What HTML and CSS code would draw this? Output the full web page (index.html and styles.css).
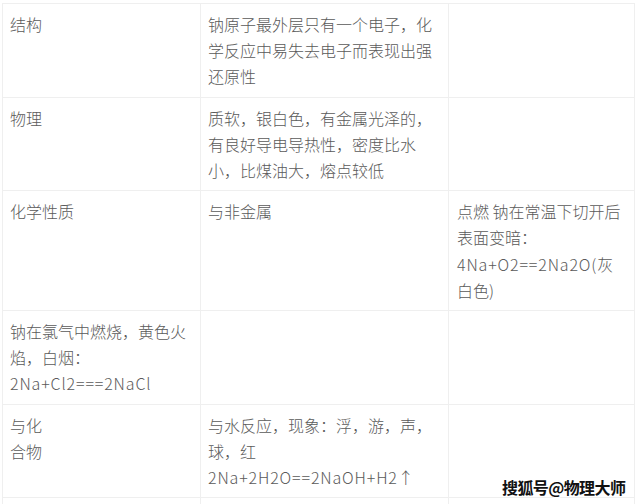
FILE: index.html
```html
<!DOCTYPE html>
<html lang="zh">
<head>
<meta charset="utf-8">
<link rel="stylesheet" href="styles.css">
</head>
<body>
<div class="page">
  <table class="grid">
    <colgroup>
      <col class="c1"><col class="c2"><col class="c3">
    </colgroup>
    <tr>
      <td>结构</td>
      <td>钠原子最外层只有一个电子，化<br>学反应中易失去电子而表现出强<br>还原性</td>
      <td></td>
    </tr>
    <tr>
      <td>物理</td>
      <td>质软，银白色，有金属光泽的，<br>有良好导电导热性，密度比水<br>小，比煤油大，熔点较低</td>
      <td></td>
    </tr>
    <tr>
      <td>化学性质</td>
      <td>与非金属</td>
      <td>点燃 钠在常温下切开后<br>表面变暗：<br><span class="f">4Na+O2==2Na2O(</span>灰<br>白色)</td>
    </tr>
    <tr>
      <td>钠在氯气中燃烧，黄色火<br>焰，白烟：<br><span class="f">2Na+Cl2===2NaCl</span></td>
      <td></td>
      <td></td>
    </tr>
    <tr>
      <td>与化<br>合物</td>
      <td>与水反应，现象：浮，游，声，<br>球，红<br><span class="f">2Na+2H2O==2NaOH+H2</span>↑</td>
      <td></td>
    </tr>
    <tr class="tail">
      <td></td><td></td><td></td>
    </tr>
  </table>
  <div class="mark">搜狐号@物理大师</div>
</div>
</body>
</html>
```

FILE: styles.css
```css
html, body {
  margin: 0;
  padding: 0;
  background: #ffffff;
}
.page {
  position: relative;
  width: 640px;
  height: 504px;
  overflow: hidden;
  padding: 3px 0 0 2px;
  box-sizing: border-box;
}
.grid {
  border-collapse: collapse;
  table-layout: fixed;
  width: 632px;
  font-family: "Noto Sans CJK SC", "Noto Sans", sans-serif;
  font-size: 16px;
  font-weight: 300;
  line-height: 26.2px;
  color: #5a5a5a;
}
.c1 { width: 198px; }
.c2 { width: 248px; }
.c3 { width: 186px; }
.grid td {
  border: 1px solid #efefef;
  padding: 7px 7px 7px 7px;
  vertical-align: top;
  white-space: nowrap;
}
.grid td:nth-child(3) {
  padding-left: 8px;
}
.f {
  letter-spacing: 0.85px;
}
.tail td {
  height: 20px;
}
.mark {
  position: absolute;
  left: 502px;
  top: 475px;
  font-family: "Noto Sans CJK SC", sans-serif;
  font-size: 16px;
  font-weight: 700;
  letter-spacing: -0.6px;
  color: #111111;
  text-shadow: 0 0 2px #ffffff, 0 0 2px #ffffff, 1px 1px 0 #ffffff;
}
```
